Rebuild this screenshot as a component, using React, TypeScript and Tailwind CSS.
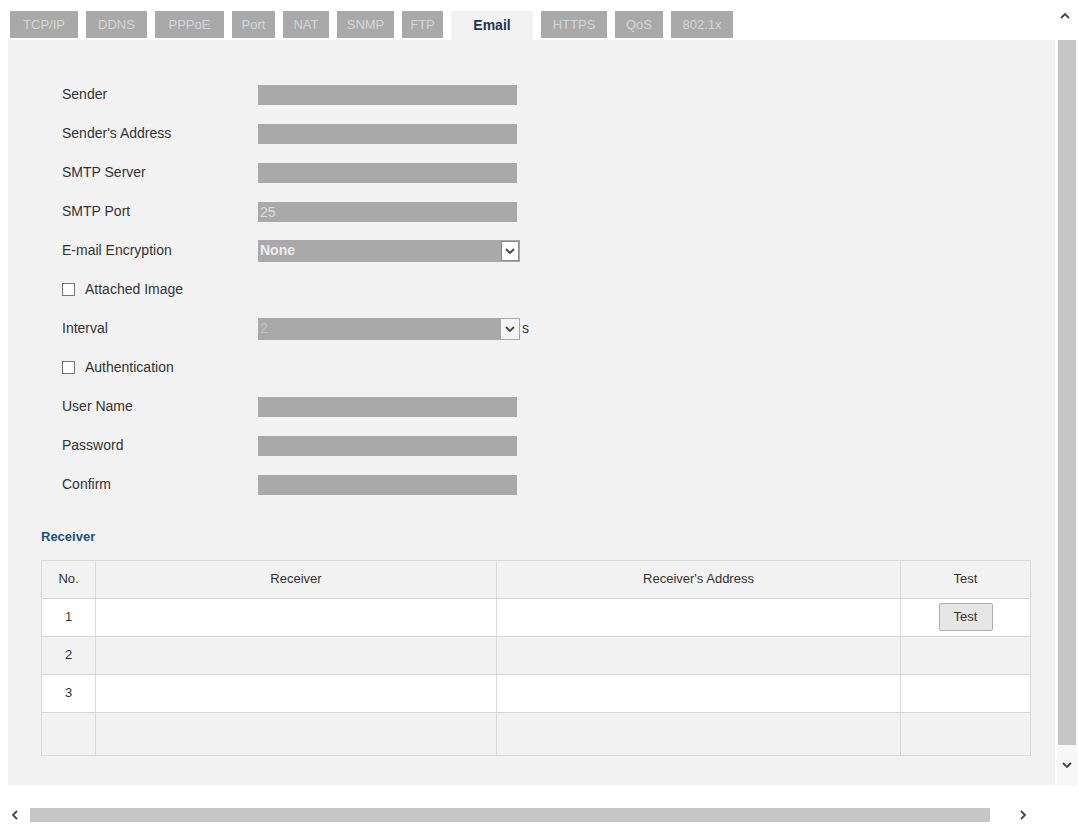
const tabs = ["TCP/IP", "DDNS", "PPPoE", "Port", "NAT", "SNMP", "FTP", "Email", "HTTPS", "QoS", "802.1x"];
const tabW = [68, 61, 69, 43, 46, 57, 41, 82, 66, 48, 62];

function Field() {
  return <div className="w-[259px] h-[20px] bg-[#a9a9a9]" />;
}

function Row({ label, children }: { label: React.ReactNode; children?: React.ReactNode }) {
  return (
    <div className="flex items-center h-[39px]">
      <div className="w-[196px] shrink-0">{label}</div>
      {children}
    </div>
  );
}

function Check({ label }: { label: string }) {
  return (
    <span className="flex items-center gap-[10px]">
      <span className="w-[13px] h-[13px] border border-[#777] bg-white" />
      {label}
    </span>
  );
}

function Chevron({ d }: { d: string }) {
  return (
    <svg width="12" height="12" viewBox="0 0 12 12">
      <path d={d} fill="none" stroke="#444" strokeWidth="1.8" />
    </svg>
  );
}

export default function App() {
  const rows = [1, 2, 3];
  return (
    <div className="w-[1079px] h-[831px] bg-white relative overflow-hidden text-[14px] text-[#333]" style={{ fontFamily: '"Liberation Sans", Arial, sans-serif' }}>
      <div className="flex pl-[10px] pt-[11px] gap-[8px] h-[40px]">
        {tabs.map((t, i) => (
          <div
            key={t}
            style={{ width: tabW[i] }}
            className={
              t === "Email"
                ? "h-[29px] bg-[#f2f2f2] text-[#1f3550] font-bold flex items-center justify-center text-[14px]"
                : "h-[27px] bg-[#a9a9a9] text-[#d6d6d6] flex items-center justify-center text-[13px]"
            }
          >
            {t}
          </div>
        ))}
      </div>
      <div className="flex">
        <div className="ml-[8px] w-[1047px] h-[745px] bg-[#f2f2f2] pt-[35px]">
          <div className="pl-[54px]">
            <Row label="Sender"><Field /></Row>
            <Row label="Sender's Address"><Field /></Row>
            <Row label="SMTP Server"><Field /></Row>
            <Row label="SMTP Port">
              <div className="w-[259px] h-[20px] bg-[#a9a9a9] text-[#ddd] pl-[2px] leading-[20px]">25</div>
            </Row>
            <Row label="E-mail Encryption">
              <div className="w-[262px] h-[22px] bg-[#a9a9a9] flex items-center justify-between">
                <span className="text-[#eee] pl-[2px] font-bold">None</span>
                <span className="w-[18px] h-[20px] bg-white border border-[#888] flex items-center justify-center mr-[1px]">
                  <Chevron d="M2 4l4 4 4-4" />
                </span>
              </div>
            </Row>
            <Row label={<Check label="Attached Image" />} />
            <Row label="Interval">
              <div className="w-[262px] h-[22px] bg-[#a9a9a9] flex items-center justify-between">
                <span className="text-[#c4c4c4] pl-[2px]">2</span>
                <span className="w-[18px] h-[20px] bg-[#f4f4f4] flex items-center justify-center mr-[1px]">
                  <Chevron d="M2 4l4 4 4-4" />
                </span>
              </div>
              <span className="ml-[2px]">s</span>
            </Row>
            <Row label={<Check label="Authentication" />} />
            <Row label="User Name"><Field /></Row>
            <Row label="Password"><Field /></Row>
            <Row label="Confirm"><Field /></Row>
          </div>
          <div className="pl-[33px] mt-[23px] text-[#1f4e79] font-bold text-[13px]">Receiver</div>
          <div className="ml-[33px] mt-[13px] w-[990px] border border-[#d9d9d9] text-[13px]">
            <div className="grid grid-cols-[54px_401px_404px_1fr] h-[37px] bg-[#f2f2f2] items-center text-center">
              <div className="border-r border-[#d9d9d9] h-full flex items-center justify-center">No.</div>
              <div className="border-r border-[#d9d9d9] h-full flex items-center justify-center">Receiver</div>
              <div className="border-r border-[#d9d9d9] h-full flex items-center justify-center">Receiver's Address</div>
              <div className="flex items-center justify-center">Test</div>
            </div>
            {rows.map((r) => (
              <div key={r} className={"grid grid-cols-[54px_401px_404px_1fr] h-[38px] border-t border-[#d5d5d5] " + (r === 2 ? "bg-[#f2f2f2]" : "bg-white")}>
                <div className="border-r border-[#d9d9d9] flex items-center justify-center">{r}</div>
                <div className="border-r border-[#d9d9d9]" />
                <div className="border-r border-[#d9d9d9]" />
                <div className="flex items-center justify-center">
                  {r === 1 && (
                    <button className="w-[54px] h-[28px] bg-[#e6e6e6] border border-[#adadad] rounded-[2px] text-[13px]">Test</button>
                  )}
                </div>
              </div>
            ))}
            <div className="grid grid-cols-[54px_401px_404px_1fr] h-[43px] border-t border-[#d5d5d5] bg-[#f2f2f2]">
              <div className="border-r border-[#d9d9d9]" />
              <div className="border-r border-[#d9d9d9]" />
              <div className="border-r border-[#d9d9d9]" />
              <div />
            </div>
          </div>
        </div>
        <div className="ml-[2px] w-[20px] h-[745px] flex flex-col bg-[#f7f7f7]">
          <div className="h-[705px] bg-[#c6c6c6] w-[18px] mx-auto" />
          <div className="flex-1 flex items-center justify-center">
            <Chevron d="M2 4l4 4 4-4" />
          </div>
        </div>
      </div>
      <div className="absolute top-[10px] right-[8px]">
        <Chevron d="M2 8l4-4 4 4" />
      </div>
      <div className="mt-[22px] flex items-center h-[16px]">
        <div className="w-[30px] flex justify-center"><Chevron d="M8 2l-4 4 4 4" /></div>
        <div className="w-[960px] h-[14px] bg-[#c6c6c6]" />
        <div className="w-[65px] flex justify-center"><Chevron d="M4 2l4 4-4 4" /></div>
      </div>
    </div>
  );
}
